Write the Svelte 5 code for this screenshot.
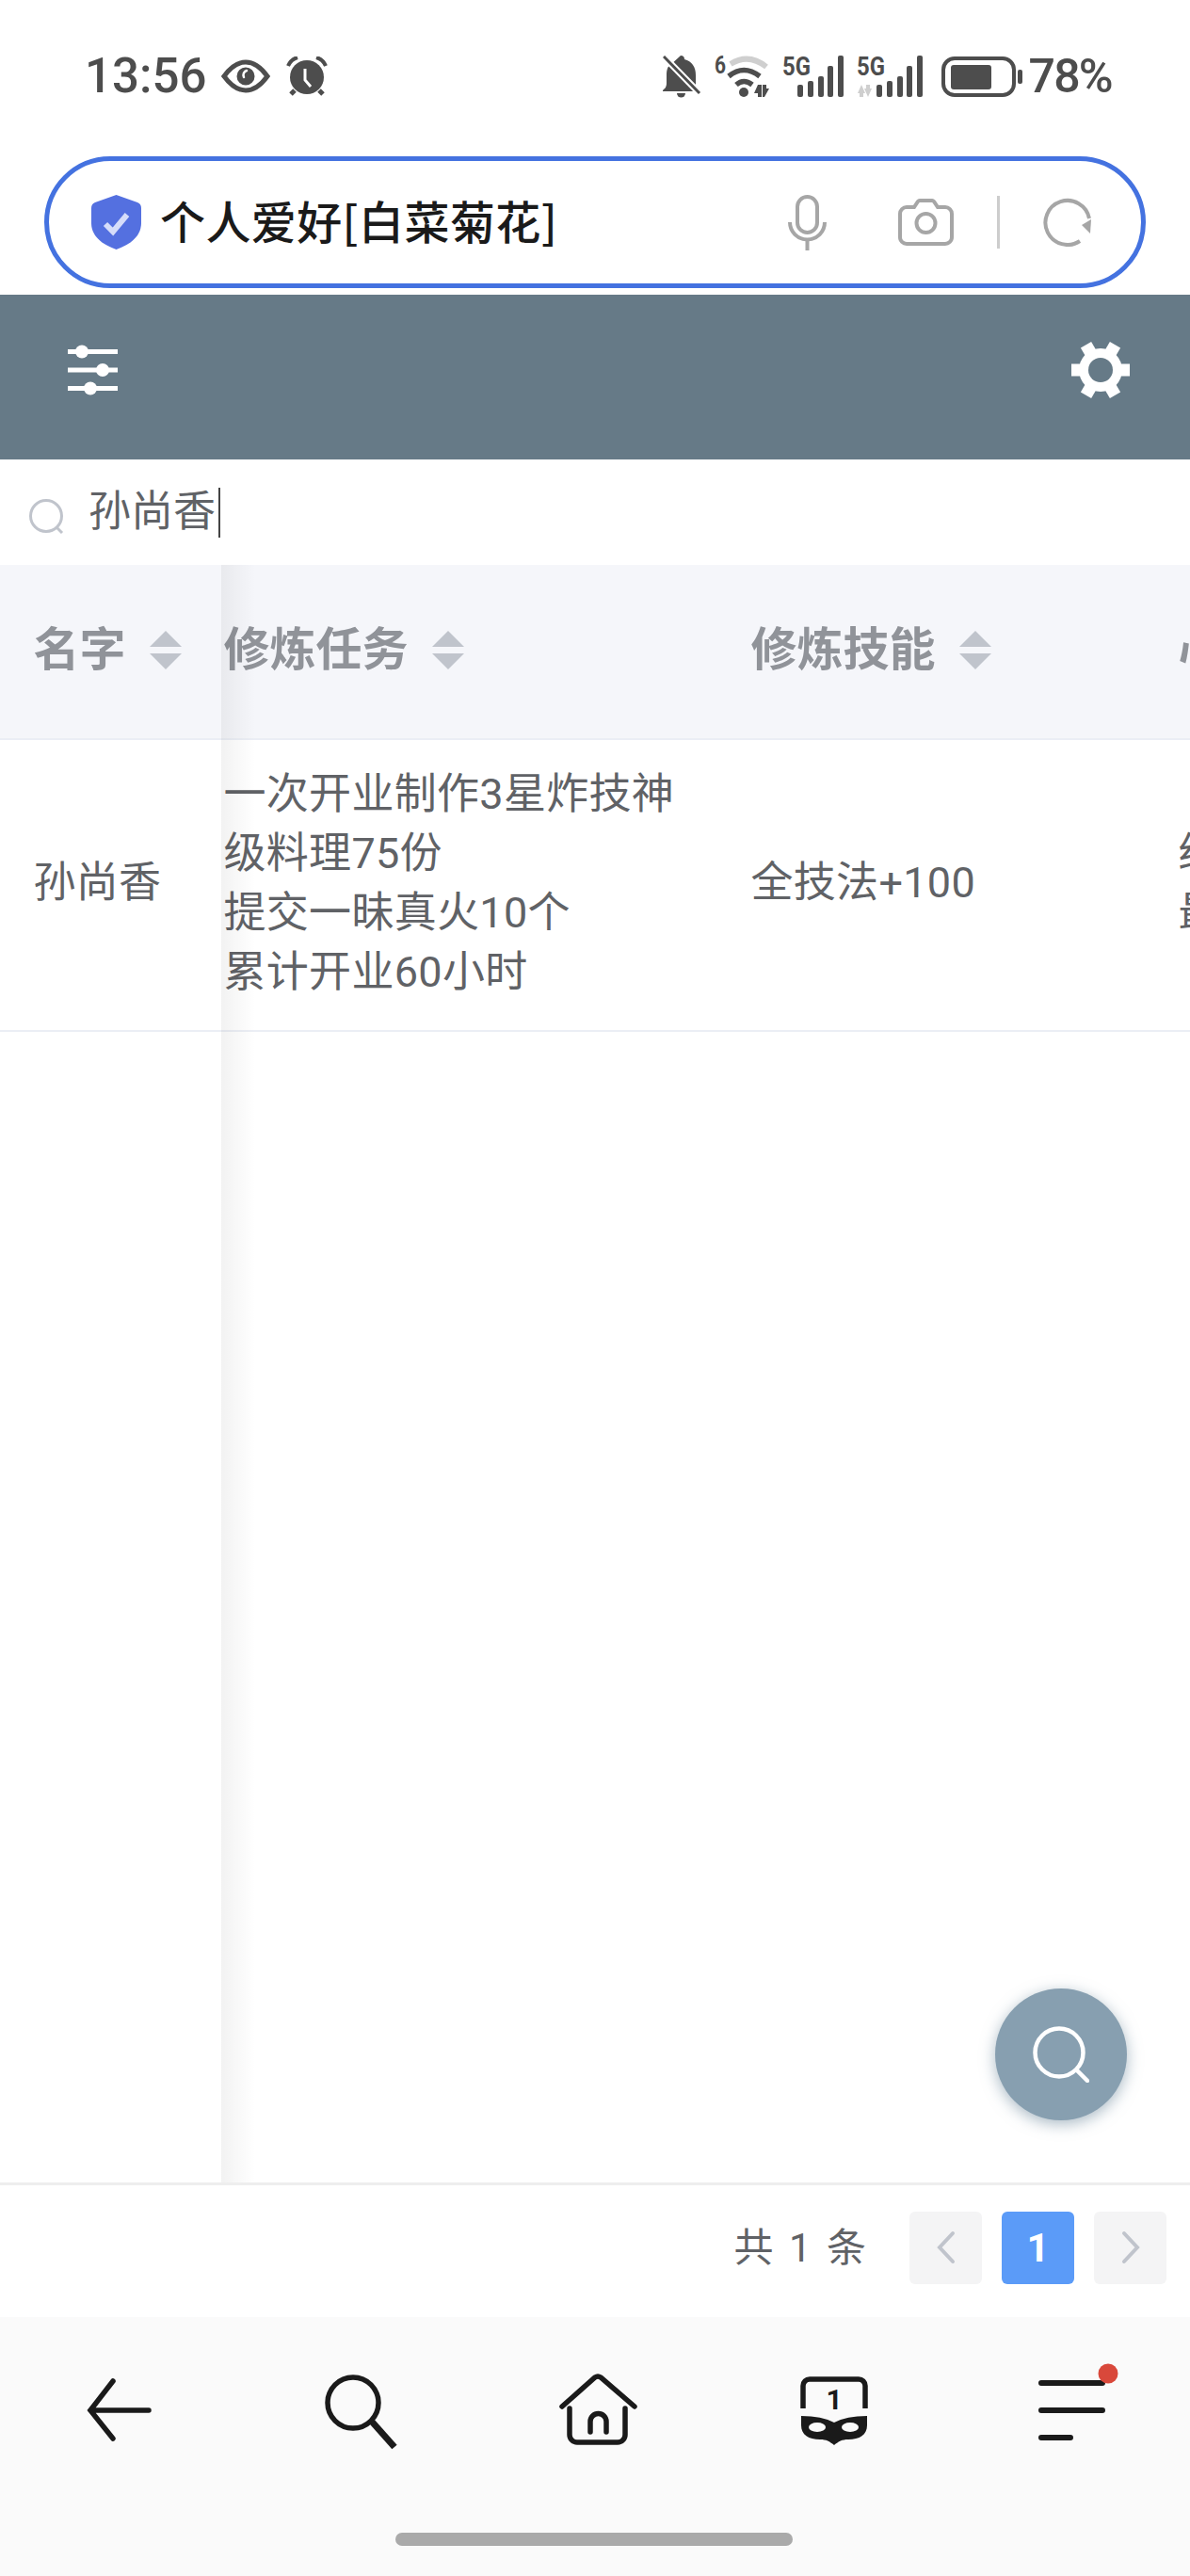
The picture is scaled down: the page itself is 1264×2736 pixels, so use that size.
<script>
	const statusGrey = '#4d4d4d';
	const teeth = [30, 90, 150, 210, 270, 330];
	const sortableCols = ['修炼任务', '修炼技能', '心法'];
	const barHeights = [
		{ x: 16, h: 13 },
		{ x: 27, h: 17 },
		{ x: 38, h: 22 },
		{ x: 48, h: 33 },
		{ x: 59, h: 44 }
	];
</script>

{#snippet signal(grey)}
	<svg class="signal" width={grey ? 71 : 65} height="60" viewBox={grey ? '0 -8 71 60' : '0 -8 65 60'}>
		<text x="0" y="21" font-size="27" font-weight="700" textLength="30" lengthAdjust="spacingAndGlyphs" fill={statusGrey}>5G</text>
		{#if grey}
			<path d="M1 40l4-9 4 9h-2v4h-4v-4zM10 31h4v4h2l-4 9-4-9h2z" fill="#cfcfcf" />
		{/if}
		{#each barHeights as b}
			<rect x={grey ? b.x + 5 : b.x} y={44 - b.h} width="6" height={b.h} rx="2" fill={statusGrey} />
		{/each}
	</svg>
{/snippet}

{#snippet sortIcon()}
	<span class="sort"><i class="up"></i><i class="down"></i></span>
{/snippet}

<div class="page">
	<div class="status">
		<div class="status-left">
			<span class="clock">13:56</span>
			<svg class="eye" width="52" height="36" viewBox="0 0 52 36">
				<path d="M3 18C11 7 18 3 26 3s15 4 23 15c-8 11-15 15-23 15S11 29 3 18z" fill="none" stroke={statusGrey} stroke-width="5" />
				<circle cx="26" cy="18" r="9.5" fill={statusGrey} />
				<path d="M27 12a5 5 0 0 0-3 7" fill="none" stroke="#fff" stroke-width="2.5" stroke-linecap="round" />
			</svg>
			<svg class="alarm" width="44" height="42" viewBox="0 0 44 42">
				<circle cx="22" cy="22" r="18" fill={statusGrey} />
				<path d="M2 10Q5 3 12 1M42 10Q39 3 32 1" fill="none" stroke={statusGrey} stroke-width="4" />
				<path d="M9 36l-4 4M35 36l4 4" stroke={statusGrey} stroke-width="5" />
				<path d="M20 13v12l6 7" fill="none" stroke="#fff" stroke-width="3" />
			</svg>
		</div>
		<div class="status-right">
			<svg width="41" height="45" viewBox="0 0 41 45">
				<path d="M19 0a4 4 0 0 1 4 4c8 2 12 8 12 17v11l3 5v1H0v-1c2-2 4-3 4-8V20c0-4 1-8 3-9z" fill={statusGrey} />
				<path d="M15 40h9a4.500 4.500 0 0 1-9 0z" fill={statusGrey} />
				<path d="M2 2l38 39" stroke="#fff" stroke-width="7" />
				<path d="M1 1l38 39" stroke={statusGrey} stroke-width="3" />
			</svg>
			<svg class="wifi" width="60" height="60" viewBox="0 -8 60 60">
				<text x="0" y="19" font-size="25" font-weight="700" textLength="12" lengthAdjust="spacingAndGlyphs" fill={statusGrey}>6</text>
				<path d="M17 9Q36-3 55 12" fill="none" stroke="#cfcfcf" stroke-width="6" />
				<path d="M15 22Q31 9 48 22M23 31Q31 24 40 31" fill="none" stroke={statusGrey} stroke-width="5.500" />
				<circle cx="31" cy="39" r="5" fill={statusGrey} />
				<path d="M42 40l4-9 4 0v13h-4v-4zM51 31h4v4h3l-5 9h-2z" fill={statusGrey} />
			</svg>
			{@render signal(false)}
			{@render signal(true)}
			<svg class="battery" width="86" height="43" viewBox="0 0 86 43">
				<rect x="2" y="2" width="75" height="39" rx="12" fill="none" stroke={statusGrey} stroke-width="4" />
				<rect x="10" y="9" width="43" height="26" rx="3" fill={statusGrey} />
				<rect x="81" y="14" width="5" height="15" rx="2" fill={statusGrey} />
			</svg>
			<span class="percent">78%</span>
		</div>
	</div>

	<div class="address-wrap">
		<div class="address">
			<svg class="shield" width="53" height="58" viewBox="0 0 53 58">
				<path d="M26.500 0L49 8q4 1.500 4 6v16c0 14-12 23-26.500 28C12 53 0 44 0 30V14q0-4.500 4-6z" fill="#5470e0" />
				<path d="M15 31l8 8 15-18" fill="none" stroke="#d6ddfa" stroke-width="6" />
			</svg>
			<span class="url">个人爱好[白菜菊花]</span>
			<div class="address-tools">
				<svg width="41" height="59" viewBox="0 0 41 59" fill="none" stroke="#a6a6a6" stroke-width="4">
					<rect x="10" y="2" width="21" height="38" rx="10.500" />
					<path d="M2 29a18.500 18.500 0 0 0 37 0M20.500 48v11" />
				</svg>
				<svg width="59" height="50" viewBox="0 0 59 50" fill="none" stroke="#a6a6a6" stroke-width="4">
					<path d="M9 9h8l4-6a3 3 0 0 1 2-1h13a3 3 0 0 1 2 1l4 6h8a7 7 0 0 1 7 7v25a7 7 0 0 1-7 7H9a7 7 0 0 1-7-7V16a7 7 0 0 1 7-7z" />
					<circle cx="29.500" cy="26" r="10" />
				</svg>
				<span class="tool-divider"></span>
				<svg width="52" height="52" viewBox="0 0 52 52" fill="none">
					<path d="M49 22A23.500 23.500 0 1 0 39 46" stroke="#a6a6a6" stroke-width="4" />
					<path d="M41 29l10-6-1 15z" fill="#a6a6a6" />
				</svg>
			</div>
		</div>
	</div>

	<header class="toolbar">
		<svg width="53" height="54" viewBox="0 0 53 54" fill="#fff">
			<rect y="5" width="53" height="5" />
			<rect y="24.500" width="53" height="5" />
			<rect y="44" width="53" height="5" />
			<circle cx="15" cy="7.500" r="7" />
			<circle cx="37" cy="27" r="7" />
			<circle cx="24" cy="46.500" r="7" />
		</svg>
		<svg width="62" height="62" viewBox="-31 -31 62 62">
			{#each teeth as t}
				<rect x="-6.500" y="-31" width="13" height="14" fill="#fff" transform="rotate({t})" />
			{/each}
			<circle r="23" fill="#fff" />
			<circle r="13" fill="#667a87" />
		</svg>
	</header>

	<div class="search-row">
		<svg width="38" height="38" viewBox="0 0 38 38" fill="none" stroke="#c0c4cc" stroke-width="3">
			<circle cx="18" cy="18" r="16.500" />
			<path d="M29 30l6 6" />
		</svg>
		<span class="search-text">孙尚香</span>
		<span class="caret"></span>
	</div>

	<div class="table">
		<div class="fixed-col">
			<div class="th"><span>名字</span>{@render sortIcon()}</div>
			<div class="td">孙尚香</div>
			<div class="fixed-shadow"></div>
		</div>
		<div class="scroll">
			<div class="grid">
				{#each sortableCols as col}
					<div class="th"><span>{col}</span>{@render sortIcon()}</div>
				{/each}
				<div class="td task">一次开业制作3星炸技神级料理75份<br />提交一昧真火10个<br />累计开业60小时</div>
				<div class="td">全技法+100</div>
				<div class="td">经营收入+50<br />最高等级+1</div>
			</div>
		</div>
	</div>

	<div class="pager">
		<span class="total">共 1 条</span>
		<button class="page-btn" aria-label="上一页">
			<svg width="22" height="36" viewBox="0 0 22 36" fill="none" stroke="#c0c4cc" stroke-width="4" stroke-linecap="round"><path d="M18 3L4 18l14 15" /></svg>
		</button>
		<button class="page-btn active">1</button>
		<button class="page-btn" aria-label="下一页">
			<svg width="22" height="36" viewBox="0 0 22 36" fill="none" stroke="#c0c4cc" stroke-width="4" stroke-linecap="round"><path d="M4 3l14 15L4 33" /></svg>
		</button>
	</div>

	<nav class="bottom-nav">
		<svg width="100" height="100" viewBox="0 0 100 100" fill="none" stroke="#1a1a1a" stroke-width="5.500" stroke-linecap="round">
			<path d="M44 19L20 50l24 30M20 50h62" />
		</svg>
		<svg width="100" height="100" viewBox="0 0 100 100" fill="none" stroke="#1a1a1a" stroke-width="5.500">
			<circle cx="46" cy="42" r="27" />
			<path d="M66 62l24 27" stroke-width="7" />
		</svg>
		<svg width="100" height="100" viewBox="0 0 100 100" fill="none" stroke="#1a1a1a" stroke-width="5.500" stroke-linecap="round">
			<path d="M15 46L50 15q3-2 6 0l36 31M23 48v28a8 8 0 0 0 8 8h43a8 8 0 0 0 8-8V48M45 73V62a8.500 8.500 0 0 1 17 0v11" />
		</svg>
		<svg width="100" height="100" viewBox="0 0 100 100">
			<path d="M18 48V24a7 7 0 0 1 7-7h52a7 7 0 0 1 7 7v24" fill="none" stroke="#1a1a1a" stroke-width="5.500" />
			<text x="51" y="49" text-anchor="middle" font-size="30" font-weight="700" fill="#1a1a1a">1</text>
			<path d="M16 56q22 0 35 7q13-7 35-7v10c0 10-8 15-20 15c-7 0-10 2-15 6c-5-4-8-6-15-6c-12 0-20-5-20-15z" fill="#1a1a1a" />
			<ellipse cx="33" cy="68" rx="9" ry="5" fill="#fafafa" />
			<ellipse cx="68" cy="68" rx="9" ry="5" fill="#fafafa" />
		</svg>
		<svg width="100" height="100" viewBox="0 0 100 100" fill="none" stroke="#1a1a1a" stroke-width="6" stroke-linecap="round">
			<path d="M18 21h65M18 50h65M18 79h31" />
			<circle cx="89" cy="11" r="10.500" fill="#d9483b" stroke="none" />
		</svg>
		<div class="home-pill"></div>
	</nav>

	<button class="fab" aria-label="搜索">
		<svg width="60" height="60" viewBox="0 0 60 60" fill="none" stroke="#fff" stroke-width="4.500">
			<circle cx="28" cy="28" r="25.500" />
			<path d="M47 47l11 11" stroke-linecap="round" />
		</svg>
	</button>
</div>

<style>
	:global(body) {
		margin: 0;
	}

	.page {
		position: relative;
		width: 1264px;
		height: 2736px;
		display: flex;
		flex-direction: column;
		background: #fff;
		overflow: hidden;
		font-family: Roboto, 'Noto Sans CJK SC', sans-serif;
		color: #606266;
	}

	.status {
		height: 166px;
		box-sizing: border-box;
		padding: 0 83px 4px 90px;
		display: flex;
		justify-content: space-between;
		align-items: center;
		color: #4d4d4d;
		flex: none;
	}
	.status-left,
	.status-right {
		display: flex;
		align-items: center;
	}
	.clock,
	.percent {
		font-size: 50px;
		line-height: 50px;
		font-weight: 500;
	}
	.clock {
		font-size: 51px;
	}
	.eye {
		margin-left: 16px;
	}
	.alarm {
		margin-left: 17px;
	}
	.status-right svg {
		margin-right: 14px;
	}
	/* the svg boxes are taller than the drawing so the text fits inside */
	.status-right .signal,
	.status-right .wifi {
		margin-top: -8px;
		margin-bottom: -8px;
	}
	.status-right .wifi {
		margin-right: 12px;
	}
	.status-right .signal:nth-of-type(4) {
		margin-right: 19px;
	}
	.status-right .battery {
		margin: 0 6px 0 0;
	}
	.percent {
		letter-spacing: -1.7px;
	}

	.address-wrap {
		height: 147px;
		padding: 0 47px;
		flex: none;
	}
	.address {
		height: 140px;
		box-sizing: border-box;
		border: 5px solid #4472e0;
		border-radius: 70px;
		padding: 0 52px 0 45px;
		display: flex;
		align-items: center;
	}
	.url {
		margin: 0 0 6px 20px;
		font-size: 48px;
		font-weight: 500;
		letter-spacing: 0.4px;
		color: #1a1a1a;
		font-family: 'Noto Sans CJK SC', sans-serif;
	}
	.address-tools {
		margin-left: auto;
		display: flex;
		align-items: center;
		gap: 46px;
	}
	.address-tools svg:first-child {
		margin-right: 30px;
	}
	.tool-divider {
		width: 3px;
		height: 56px;
		background: #cdcdcd;
	}

	.toolbar {
		height: 175px;
		box-sizing: border-box;
		padding: 0 64px 16px 72px;
		background: #667a87;
		display: flex;
		justify-content: space-between;
		align-items: center;
		flex: none;
	}

	.search-row {
		height: 112px;
		padding-left: 31px;
		display: flex;
		align-items: center;
		flex: none;
	}
	.search-row svg {
		margin-top: 10px;
	}
	.search-text {
		margin: 0 0 10px 25px;
		font-size: 45px;
	}
	.caret {
		width: 2px;
		height: 53px;
		margin: 0 0 0 3px;
		background: #444;
	}

	.table {
		flex: 1;
		display: flex;
		min-height: 0;
	}
	.fixed-col {
		position: relative;
		width: 235px;
		flex: none;
		z-index: 1;
		background: #fff;
	}
	.fixed-shadow {
		position: absolute;
		top: 0;
		bottom: 0;
		left: 100%;
		width: 36px;
		background: linear-gradient(to right, rgba(0, 0, 0, 0.05), rgba(0, 0, 0, 0));
	}
	.scroll {
		flex: 1;
		overflow: hidden;
	}
	.grid {
		display: grid;
		grid-template-columns: 562.5px 454px 300px;
		width: 1316.5px;
	}
	.th {
		height: 186px;
		box-sizing: border-box;
		padding-bottom: 4px;
		display: flex;
		align-items: center;
		background: #f5f6fa;
		border-bottom: 2px solid #ebeef5;
		color: #909399;
		font-size: 49px;
		font-weight: 700;
	}
	.th span:first-child {
		margin-top: -10px;
	}
	.td {
		height: 310px;
		box-sizing: border-box;
		display: flex;
		align-items: center;
		border-bottom: 2px solid #ebeef5;
		font-size: 45px;
		line-height: 63px;
		letter-spacing: 0.3px;
	}
	.fixed-col .th,
	.fixed-col .td {
		padding-left: 35.5px;
	}
	.fixed-col .td {
		padding-bottom: 6px;
	}
	.grid > :nth-child(3n + 1) {
		padding-left: 2.5px;
	}
	.grid .td {
		display: block;
		padding-top: 89px;
	}
	.grid .td.task {
		padding-top: 26px;
		padding-right: 80px;
	}
	.grid .td:nth-child(5) {
		padding-top: 120px;
	}
	.sort {
		display: flex;
		flex-direction: column;
		gap: 7px;
		margin-left: 25px;
	}
	.sort i {
		display: block;
		width: 0;
		height: 0;
		border-left: 17.5px solid transparent;
		border-right: 17.5px solid transparent;
	}
	.sort .up {
		border-bottom: 17px solid #c0c4cc;
	}
	.sort .down {
		border-top: 17px solid #c0c4cc;
	}

	.pager {
		height: 143px;
		box-sizing: border-box;
		border-top: 3px solid #eeeeee;
		padding: 0 25px 8px 0;
		display: flex;
		justify-content: flex-end;
		align-items: center;
		gap: 21px;
		flex: none;
	}
	.total {
		margin: 0 25px 8px 0;
		font-size: 42px;
		word-spacing: 6px;
	}
	.page-btn {
		width: 77px;
		height: 77px;
		padding: 0;
		border: none;
		border-radius: 6px;
		background: #f4f4f5;
		display: flex;
		align-items: center;
		justify-content: center;
		font-family: inherit;
	}
	.page-btn.active {
		background: #5b9bf8;
		color: #fff;
		font-size: 42px;
		font-weight: 700;
	}

	.bottom-nav {
		position: relative;
		height: 275px;
		box-sizing: border-box;
		padding-top: 49px;
		background: #fafafa;
		display: grid;
		grid-template-columns: repeat(5, 1fr);
		justify-items: center;
		align-items: start;
		flex: none;
	}
	.home-pill {
		position: absolute;
		left: 420px;
		top: 229px;
		width: 422px;
		height: 14px;
		border-radius: 7px;
		background: #aaaaaa;
	}

	.fab {
		position: absolute;
		left: 1057px;
		top: 2112px;
		width: 140px;
		height: 140px;
		padding: 0;
		border: none;
		border-radius: 50%;
		background: #879fb0;
		box-shadow: 0 4px 16px rgba(100, 130, 150, 0.55);
		display: flex;
		align-items: center;
		justify-content: center;
		z-index: 2;
	}
</style>
